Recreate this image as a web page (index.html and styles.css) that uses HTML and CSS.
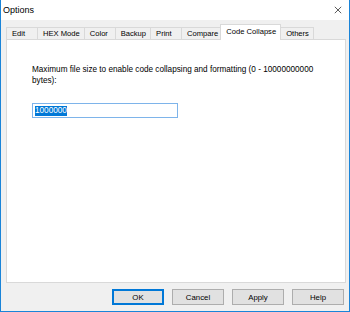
FILE: index.html
```html
<!DOCTYPE html>
<html>
    <head>
        <title>Options</title>
        <link rel="stylesheet" href="styles.css">
    </head>
    <body>
        <div class="window">
            <div class="titlebar">
                <span class="title">Options</span>
                <svg class="close" viewBox="0 0 10 10">
                    <path d="M 1 1 L 9 9 M 9 1 L 1 9" stroke="#333" stroke-width="1" fill="none" />
                </svg>
            </div>

            <div class="tabs">
                <div class="tab">Edit</div>
                <div class="tab">HEX Mode</div>
                <div class="tab">Color</div>
                <div class="tab">Backup</div>
                <div class="tab">Print</div>
                <div class="tab">Compare</div>
                <div class="tab active">Code Collapse</div>
                <div class="tab">Others</div>
            </div>

            <div class="panel">
                <p class="label">Maximum file size to enable code collapsing and formatting (0 - 10000000000 bytes):</p>
                <div class="field">
                    <span class="selected">1000000</span>
                </div>
            </div>

            <div class="footer">
                <button class="btn default">OK</button>
                <button class="btn">Cancel</button>
                <button class="btn">Apply</button>
                <button class="btn">Help</button>
            </div>
        </div>
    </body>
</html>
```

FILE: styles.css
```css
body {
    margin: 0;
    padding: 0;
    background: #f0f0f0;
    font-family: 'Liberation Sans', Arial, sans-serif;
    color: #000;
}

.window {
    width: 350px;
    height: 312px;
    box-sizing: border-box;
    border: 1px solid #1a84d8;
    border-top: none;
    background: #f0f0f0;
    display: flex;
    flex-direction: column;
}

.titlebar {
    height: 20px;
    background: #fff;
    display: flex;
    align-items: center;
    justify-content: space-between;
    padding: 0 7px 0 2px;
}

.title {
    font-size: 9px;
}

.close {
    width: 8px;
    height: 8px;
}

.tabs {
    display: flex;
    align-items: flex-end;
    height: 15px;
    margin: 4px 0 0 5px;
}

.tab {
    min-width: 31px;
    height: 12px;
    box-sizing: border-box;
    border: 1px solid #d9d9d9;
    border-bottom: none;
    border-right: none;
    padding: 0 4px 0 5px;
    font-size: 7.6px;
    line-height: 11px;
    background: #f0f0f0;
    white-space: nowrap;
}

.tab:last-child {
    border-right: 1px solid #d9d9d9;
}

.tab.active {
    height: 16px;
    margin-bottom: -1px;
    margin-left: -2px;
    background: #fff;
    border-right: 1px solid #d9d9d9;
    line-height: 13px;
    position: relative;
}

.tab.active + .tab {
    border-left: none;
}

.panel {
    height: 244px;
    box-sizing: border-box;
    margin: 0 3px 0 5px;
    background: #fff;
    border: 1px solid #d9d9d9;
    padding: 25px 0 0 25px;
}

.label {
    margin: 0;
    width: 290px;
    font-size: 8.2px;
    line-height: 10.5px;
}

.field {
    margin-top: 17px;
    width: 146px;
    height: 15px;
    box-sizing: border-box;
    border: 1px solid #7eb4ea;
    padding: 0 2px;
    display: flex;
    align-items: center;
}

.selected {
    background: #0078d7;
    color: #fff;
    font-size: 8.2px;
    line-height: 10px;
}

.footer {
    flex: 1;
    display: flex;
    justify-content: flex-end;
    align-items: center;
    gap: 8px;
    padding-right: 5px;
}

.btn {
    width: 52px;
    height: 16px;
    padding: 0;
    border: 1px solid #adadad;
    background: #e1e1e1;
    font-family: 'Liberation Sans', Arial, sans-serif;
    font-size: 7.8px;
    color: #000;
}

.btn.default {
    border: 1px solid #0078d7;
    box-shadow: inset 0 0 0 1px #0078d7;
}
```
